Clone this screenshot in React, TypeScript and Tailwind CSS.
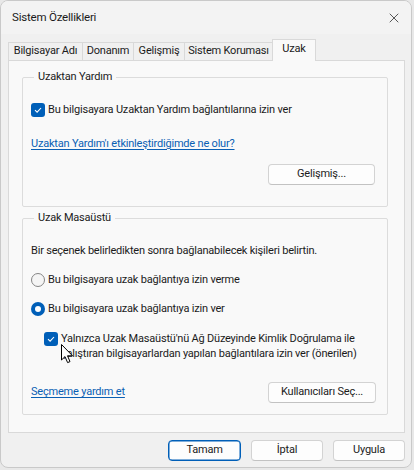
import { X } from "lucide-react";

const font = "font-['Roboto','Liberation_Sans',sans-serif]";

const Check = () => (
    <span className="w-[14px] h-[14px] rounded-[3px] bg-[#005fb8] flex items-center justify-center shrink-0">
        <svg width="10" height="10" viewBox="0 0 10 10">
            <path d="M2 5.2 L4.1 7.2 L8 3" fill="none" stroke="white" strokeWidth="1.1" />
        </svg>
    </span>
);

const Radio = ({ on }: { on?: boolean }) =>
    on ? (
        <span className="w-[14px] h-[14px] rounded-full bg-[#005fb8] flex items-center justify-center shrink-0">
            <span className="w-[6px] h-[6px] rounded-full bg-white" />
        </span>
    ) : (
        <span className="w-[14px] h-[14px] rounded-full border border-[#858585] bg-[#f5f5f5] shrink-0" />
    );

const Button = ({ label, primary, w }: { label: string; primary?: boolean; w: string }) => (
    <button
        className={`${w} h-[21px] rounded-[4px] bg-[#fdfdfd] text-[#1b1b1b] flex items-center justify-center ${
            primary ? "border border-[#005fb8] shadow-[inset_0_0_0_0.5px_#005fb8]" : "border border-[#d3d3d3] border-b-[#c2c2c2]"
        }`}
    >
        {label}
    </button>
);

const tabs = [
    { label: "Bilgisayar Adı", w: "w-[75px]" },
    { label: "Donanım", w: "w-[52px]" },
    { label: "Gelişmiş", w: "w-[52px]" },
    { label: "Sistem Koruması", w: "w-[89px]" },
];

const Cursor = () => (
    <svg className="absolute left-[61px] top-[344px]" width="13" height="20" viewBox="0 0 13 20">
        <path
            d="M0.5 0.5 L0.5 16 L4 12.6 L6.6 18.6 L9 17.6 L6.5 11.8 L11.5 11.8 Z"
            fill="white"
            stroke="black"
            strokeWidth="1"
            strokeLinejoin="round"
        />
    </svg>
);

export default function App() {
    return (
        <div
            className={`w-[414px] h-[470px] bg-[#e8e8e8] ${font} text-[11px] tracking-[-0.2px] text-[#1b1b1b] whitespace-nowrap relative`}
        >
            <div className="w-[412px] h-[468px] rounded-[8px] border border-[#c9c9c9] bg-[#f0f0f0] flex flex-col overflow-hidden">
                {/* title bar */}
                <div className="h-[33px] bg-[#f3f3f3] flex items-center justify-between pl-[11px] pr-[9px] shrink-0">
                    <span className="text-[11.5px]">Sistem Özellikleri</span>
                    <X size={16} strokeWidth={1.1} className="text-[#1b1b1b]" />
                </div>

                {/* tabs */}
                <div className="flex items-end h-[26px] pl-[7px] pt-[5px] relative z-10">
                    {tabs.map((t) => (
                        <div
                            key={t.label}
                            className={`${t.w} h-[18px] border border-[#d9d9d9] border-b-0 -ml-px first:ml-0 flex items-center justify-center bg-[#f0f0f0]`}
                        >
                            {t.label}
                        </div>
                    ))}
                    <div className="w-[44px] h-[22px] -mb-px border border-[#d9d9d9] border-b-0 -ml-px bg-[#f9f9f9] flex items-start pt-[1px] justify-center">
                        Uzak
                    </div>
                </div>

                {/* panel */}
                <div className="ml-[7px] w-[397px] h-[373px] border border-[#d9d9d9] bg-[#f9f9f9] pt-[8px] pl-[13px]">
                    <fieldset className="w-[366px] min-w-0 h-[138px] border border-[#dcdcdc] rounded-[2px] px-[8px]">
                        <legend className="ml-[3px] px-[4px] leading-[16px]">Uzaktan Yardım</legend>
                        <div className="flex items-center gap-[3px] mt-[17px] h-[16px]">
                            <Check />
                            <span>Bu bilgisayara Uzaktan Yardım bağlantılarına izin ver</span>
                        </div>
                        <div className="mt-[18px] h-[16px] flex items-center">
                            <a className="text-[#0a5fb4] underline underline-offset-2">
                                Uzaktan Yardım'ı etkinleştirdiğimde ne olur?
                            </a>
                        </div>
                        <div className="flex justify-end mt-[12px] pr-[4px]">
                            <Button label="Gelişmiş..." w="w-[107px]" />
                        </div>
                    </fieldset>

                    <fieldset className="w-[366px] min-w-0 h-[205px] mt-[3px] border border-[#dcdcdc] rounded-[2px] px-[8px]">
                        <legend className="ml-[3px] px-[4px] leading-[16px]">Uzak Masaüstü</legend>
                        <div className="mt-[17px] h-[16px] flex items-center">
                            Bir seçenek belirledikten sonra bağlanabilecek kişileri belirtin.
                        </div>
                        <div className="mt-[13px] h-[16px] flex items-center gap-[3px]">
                            <Radio />
                            <span>Bu bilgisayara uzak bağlantıya izin verme</span>
                        </div>
                        <div className="mt-[13px] h-[16px] flex items-center gap-[3px]">
                            <Radio on />
                            <span>Bu bilgisayara uzak bağlantıya izin ver</span>
                        </div>
                        <div className="mt-[14px] pl-[13px] flex items-start gap-[3px]">
                            <div className="pt-[1px]">
                                <Check />
                            </div>
                            <span className="leading-[15px]">
                                Yalnızca Uzak Masaüstü'nü Ağ Düzeyinde Kimlik Doğrulama ile
                                <br />
                                çalıştıran bilgisayarlardan yapılan bağlantılara izin ver (önerilen)
                            </span>
                        </div>
                        <div className="mt-[21px] flex items-center justify-between pr-[3px]">
                            <a className="text-[#0a5fb4] underline underline-offset-2">Seçmeme yardım et</a>
                            <Button label="Kullanıcıları Seç..." w="w-[108px]" />
                        </div>
                    </fieldset>
                </div>

                {/* footer */}
                <div className="flex justify-end gap-[10px] pr-[6px] pt-[7px]">
                    <Button label="Tamam" primary w="w-[73px]" />
                    <Button label="İptal" w="w-[72px]" />
                    <Button label="Uygula" w="w-[72px]" />
                </div>
            </div>
            <Cursor />
        </div>
    );
}
